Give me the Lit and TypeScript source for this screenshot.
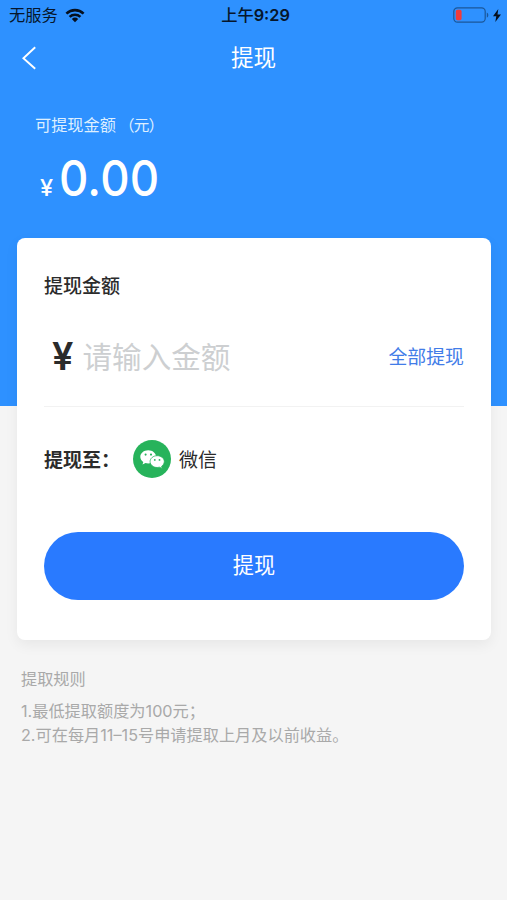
import { LitElement, html, css } from "lit";
import { customElement, property } from "lit/decorators.js";

@customElement("status-bar")
class StatusBar extends LitElement {
  static styles = css`
    :host { display: grid; grid-template-columns: 1fr auto 1fr; align-items: center; height: 30px; padding: 0 6px 0 9px; color: #06162b; font-size: 16.3px; line-height: 24px; }
    .left, .right { display: flex; align-items: center; }
    .left { gap: 7px; }
    .right { justify-content: flex-end; gap: 4px; }
    .time { padding-left: 1px; font-weight: 500; font-size: 16.3px; }
    .digits { font-weight: 600; }
    svg { display: block; }
  `;
  render() {
    return html`
      <div class="left">
        <span>无服务</span>
        <svg width="20" height="15" viewBox="0 0 20 15">
          <g fill="none" stroke="#06101f" stroke-width="2.6">
            <path d="M1.4 5.6a12.4 12.4 0 0 1 17.2 0" />
            <path d="M4.6 8.9a7.9 7.9 0 0 1 10.8 0" />
          </g>
          <path d="M10 14.2l-3.2-3.2a4.7 4.7 0 0 1 6.4 0z" fill="#06101f" />
        </svg>
      </div>
      <div class="time">上午<span class="digits">9:29</span></div>
      <div class="right">
        <svg width="36" height="16" viewBox="0 0 36 16">
          <rect x="0.8" y="0.8" width="31.4" height="14.4" rx="3.6" fill="none" stroke="#1b5799" stroke-width="1.2" />
          <rect x="2.8" y="2.8" width="5.8" height="10.4" rx="1.6" fill="#f13b3c" />
          <path d="M33.8 5.4c2 .8 2 4.4 0 5.2z" fill="#1b5799" />
        </svg>
        <svg width="8" height="13" viewBox="0 0 8 13"><path d="M5.3 0L0 7.3h3.3L2.3 13 8 5.4H4.5z" fill="#06101f" /></svg>
      </div>
    `;
  }
}

@customElement("wechat-logo")
class WechatLogo extends LitElement {
  static styles = css`
    :host { display: block; width: 38px; height: 38px; }
    svg { display: block; }
  `;
  render() {
    return html`
      <svg width="38" height="38" viewBox="0 0 38 38">
        <circle cx="19" cy="19" r="19" fill="#27b35b" />
        <path d="M15.2 10.2c-4.4 0-7.9 2.9-7.9 6.6 0 2.1 1.2 4 3 5.2l-.8 2.6 3-1.6c.9.3 1.8.4 2.7.4 4.4 0 7.9-2.9 7.9-6.6s-3.5-6.6-7.9-6.6z" fill="#fff" />
        <path d="M24.2 15.7c-4 0-7.1 2.6-7.1 5.9s3.2 5.9 7.1 5.9c.8 0 1.6-.1 2.3-.3l2.7 1.3-.6-2.2c1.6-1.1 2.7-2.8 2.7-4.7 0-3.3-3.2-5.9-7.1-5.9z" fill="#fff" stroke="#27b35b" stroke-width=".8" />
        <g fill="#27b35b">
          <circle cx="12.6" cy="14.6" r="1.05" /><circle cx="18" cy="14.6" r="1.05" />
          <circle cx="21.8" cy="19.9" r=".9" /><circle cx="26.5" cy="19.9" r=".9" />
        </g>
      </svg>
    `;
  }
}

@customElement("app-root")
class AppRoot extends LitElement {
  @property({ type: String }) balance = "0.00";

  static styles = css`
    :host { display: block; height: 900px; overflow: hidden; background: #f5f5f5; color: #2b2b2b; font-family: "Inter", "Noto Sans CJK SC", sans-serif; }
    * { box-sizing: border-box; }
    .hero { height: 406px; background: #2e91ff; color: #fff; }
    .nav { display: grid; grid-template-columns: 1fr auto 1fr; align-items: center; height: 56px; padding: 0 22px; }
    .title { font-size: 22.6px; line-height: 34px; }
    .nav svg { display: block; }
    .balance-label { padding: 26px 0 0 35px; font-size: 16.2px; line-height: 26px; color: #deefff; }
    .unit { margin-left: -1.5px; font-size: 15.6px; letter-spacing: -0.9px; }
    .balance { display: flex; align-items: baseline; padding: 8px 0 0 40px; height: 75px; line-height: 62px; }
    .balance .sign { width: 19px; padding-bottom: 1px; font-size: 23.5px; font-weight: 450; }
    .balance .value { font-size: 49.5px; font-weight: 450; letter-spacing: 0.2px; transform: scaleX(0.92); transform-origin: left; }
    .card { height: 402px; margin: -168px 16px 0 17px; padding: 34px 27px 0; border-radius: 8px; background: #fff; box-shadow: 0 5px 14px rgba(0, 0, 0, 0.06); }
    .heading { font-size: 19px; font-weight: 500; line-height: 30px; }
    .amount { display: flex; align-items: center; height: 105px; padding: 4px 0 0 8px; border-bottom: 1px solid #f2f2f2; }
    .yen { width: 30.5px; font-size: 38px; font-weight: 600; line-height: 44px; }
    .placeholder { flex: 1; padding-top: 2px; font-size: 29.6px; line-height: 44px; color: #cdcfd1; }
    .all { font-size: 18.9px; line-height: 30px; padding-top: 3px; color: #427ce8; }
    .pay { display: flex; align-items: center; height: 104px; font-size: 19px; line-height: 30px; }
    .target, .name { padding-top: 3px; }
    .target { display: flex; width: 89px; font-weight: 700; }
    .colon { font-feature-settings: "halt"; }
    .name { padding-left: 8px; }
    .submit { display: block; width: 100%; height: 67.5px; margin-top: 21px; padding: 0 0 1px; border: 0; border-radius: 34px; background: #297aff; color: #fff; font: inherit; font-size: 21.2px; line-height: 65px; text-align: center; }
    .rules { padding: 27px 21px 0; font-size: 16.2px; line-height: 24.5px; color: #a9a9a9; }
    .rules-title { padding-bottom: 7px; }
  `;

  render() {
    return html`
      <div class="hero">
        <status-bar></status-bar>
        <div class="nav">
          <svg width="15" height="24" viewBox="0 0 15 24"><path d="M13.2 1.2L1.4 12.2l11.8 10.6" fill="none" stroke="#fff" stroke-width="1.9" /></svg>
          <span class="title">提现</span>
        </div>
        <div class="balance-label">可提现金额 <span class="unit">（元）</span></div>
        <div class="balance"><span class="sign">¥</span><span class="value">${this.balance}</span></div>
      </div>
      <div class="card">
        <div class="heading">提现金额</div>
        <div class="amount">
          <span class="yen">¥</span>
          <span class="placeholder">请输入金额</span>
          <span class="all">全部提现</span>
        </div>
        <div class="pay">
          <span class="target">提现至<span class="colon">：</span></span>
          <wechat-logo></wechat-logo>
          <span class="name">微信</span>
        </div>
        <button class="submit">提现</button>
      </div>
      <div class="rules">
        <div class="rules-title">提取规则</div>
        <div>1.最低提取额度为100元；</div>
        <div>2.可在每月11–15号申请提取上月及以前收益。</div>
      </div>
    `;
  }
}
